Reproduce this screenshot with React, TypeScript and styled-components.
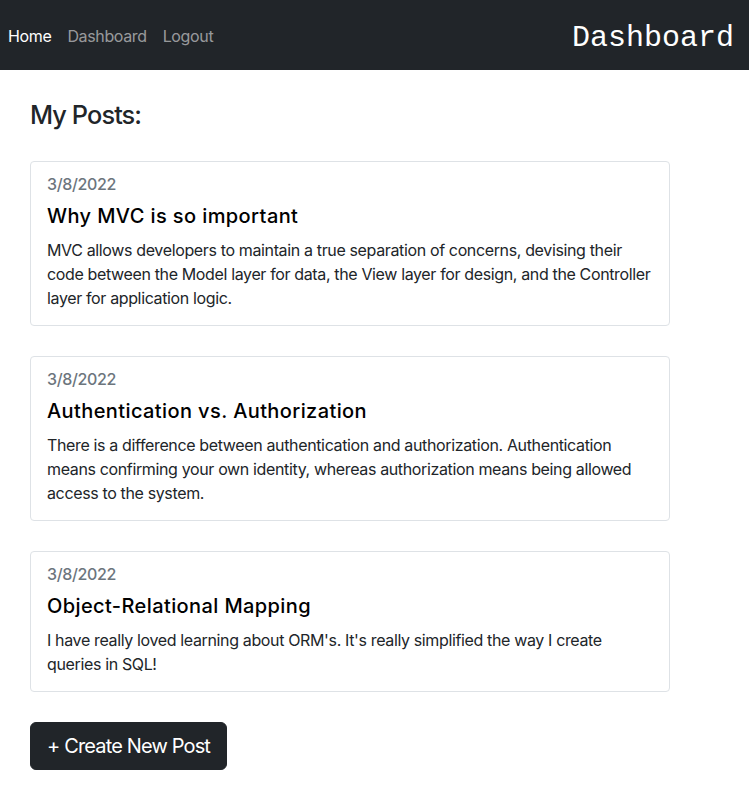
import React, { FC } from "react"
import styled, { createGlobalStyle } from "styled-components"

type Post = {
  date: string
  title: string
  body: string
}

const posts: Post[] = [
  {
    date: "3/8/2022",
    title: "Why MVC is so important",
    body:
      "MVC allows developers to maintain a true separation of concerns, devising their code between the Model layer for data, the View layer for design, and the Controller layer for application logic.",
  },
  {
    date: "3/8/2022",
    title: "Authentication vs. Authorization",
    body:
      "There is a difference between authentication and authorization. Authentication means confirming your own identity, whereas authorization means being allowed access to the system.",
  },
  {
    date: "3/8/2022",
    title: "Object-Relational Mapping",
    body:
      "I have really loved learning about ORM's. It's really simplified the way I create queries in SQL!",
  },
]

const links = ["Home", "Dashboard", "Logout"]

const App: FC = () => {
  return (
    <>
      <GlobalStyle />
      <Navbar>
        <NavLinks>
          {links.map((link, i) => (
            <NavLink key={link} href="#" $active={i === 0}>
              {link}
            </NavLink>
          ))}
        </NavLinks>
        <Brand>Dashboard</Brand>
      </Navbar>
      <Main>
        <Heading>My Posts:</Heading>
        {posts.map((post) => (
          <Card key={post.title}>
            <PostDate>{post.date}</PostDate>
            <PostTitle>{post.title}</PostTitle>
            <PostBody>{post.body}</PostBody>
          </Card>
        ))}
        <CreateButton type="button">+ Create New Post</CreateButton>
      </Main>
    </>
  )
}

export default App

const GlobalStyle = createGlobalStyle`
  body {
    margin: 0;
    background: #fff;
    color: #212529;
    font-family: Inter, "Noto Sans", "Liberation Sans", sans-serif;
    font-size: 16px;
    line-height: 1.5;
    letter-spacing: -0.36px;
  }
  * {
    box-sizing: border-box;
  }
`

const Navbar = styled.nav`
  display: flex;
  justify-content: space-between;
  align-items: center;
  height: 70px;
  padding: 0 15px 0 0;
  background: #212529;
`

const NavLinks = styled.div`
  display: flex;
  align-items: center;
  padding-top: 2px;
`

const NavLink = styled.a<{ $active?: boolean }>`
  padding: 8px 8px;
  font-size: 16px;
  text-decoration: none;
  color: ${({ $active }) => ($active ? "#fff" : "rgba(255, 255, 255, 0.55)")};
`

const Brand = styled.h1`
  margin: 0;
  padding-top: 5px;
  font-family: "Liberation Mono", "Courier New", monospace;
  font-size: 30px;
  font-weight: 400;
  line-height: 1.2;
  letter-spacing: 0;
  color: #fff;
`

const Main = styled.main`
  display: flex;
  flex-direction: column;
  align-items: flex-start;
  padding: 30px 30px 30px;
`

const Heading = styled.h2`
  margin: 0 0 31px;
  font-size: 25.3px;
  font-weight: 500;
  line-height: 1.2;
  letter-spacing: -0.9px;
`

const Card = styled.div`
  width: 640px;
  margin-bottom: 30px;
  padding: 16px 16px 15px;
  border: 1px solid #dee2e6;
  border-radius: 4px;
`

const PostDate = styled.h6`
  margin: 0 0 14px;
  font-size: 16px;
  font-weight: 500;
  line-height: 12px;
  color: #6c757d;
`

const PostTitle = styled.h5`
  margin: 0 0 10px;
  font-size: 20px;
  font-weight: 500;
  line-height: 24px;
  letter-spacing: 0.4px;
  color: #000;
`

const PostBody = styled.p`
  margin: 0;
  font-size: 16px;
  line-height: 24px;
`

const CreateButton = styled.button`
  padding: 8px 16px;
  border: 1px solid #212529;
  border-radius: 6px;
  background: #212529;
  color: #fff;
  font-family: inherit;
  font-size: 20px;
  line-height: 1.5;
  letter-spacing: -0.85px;
  cursor: pointer;
`
